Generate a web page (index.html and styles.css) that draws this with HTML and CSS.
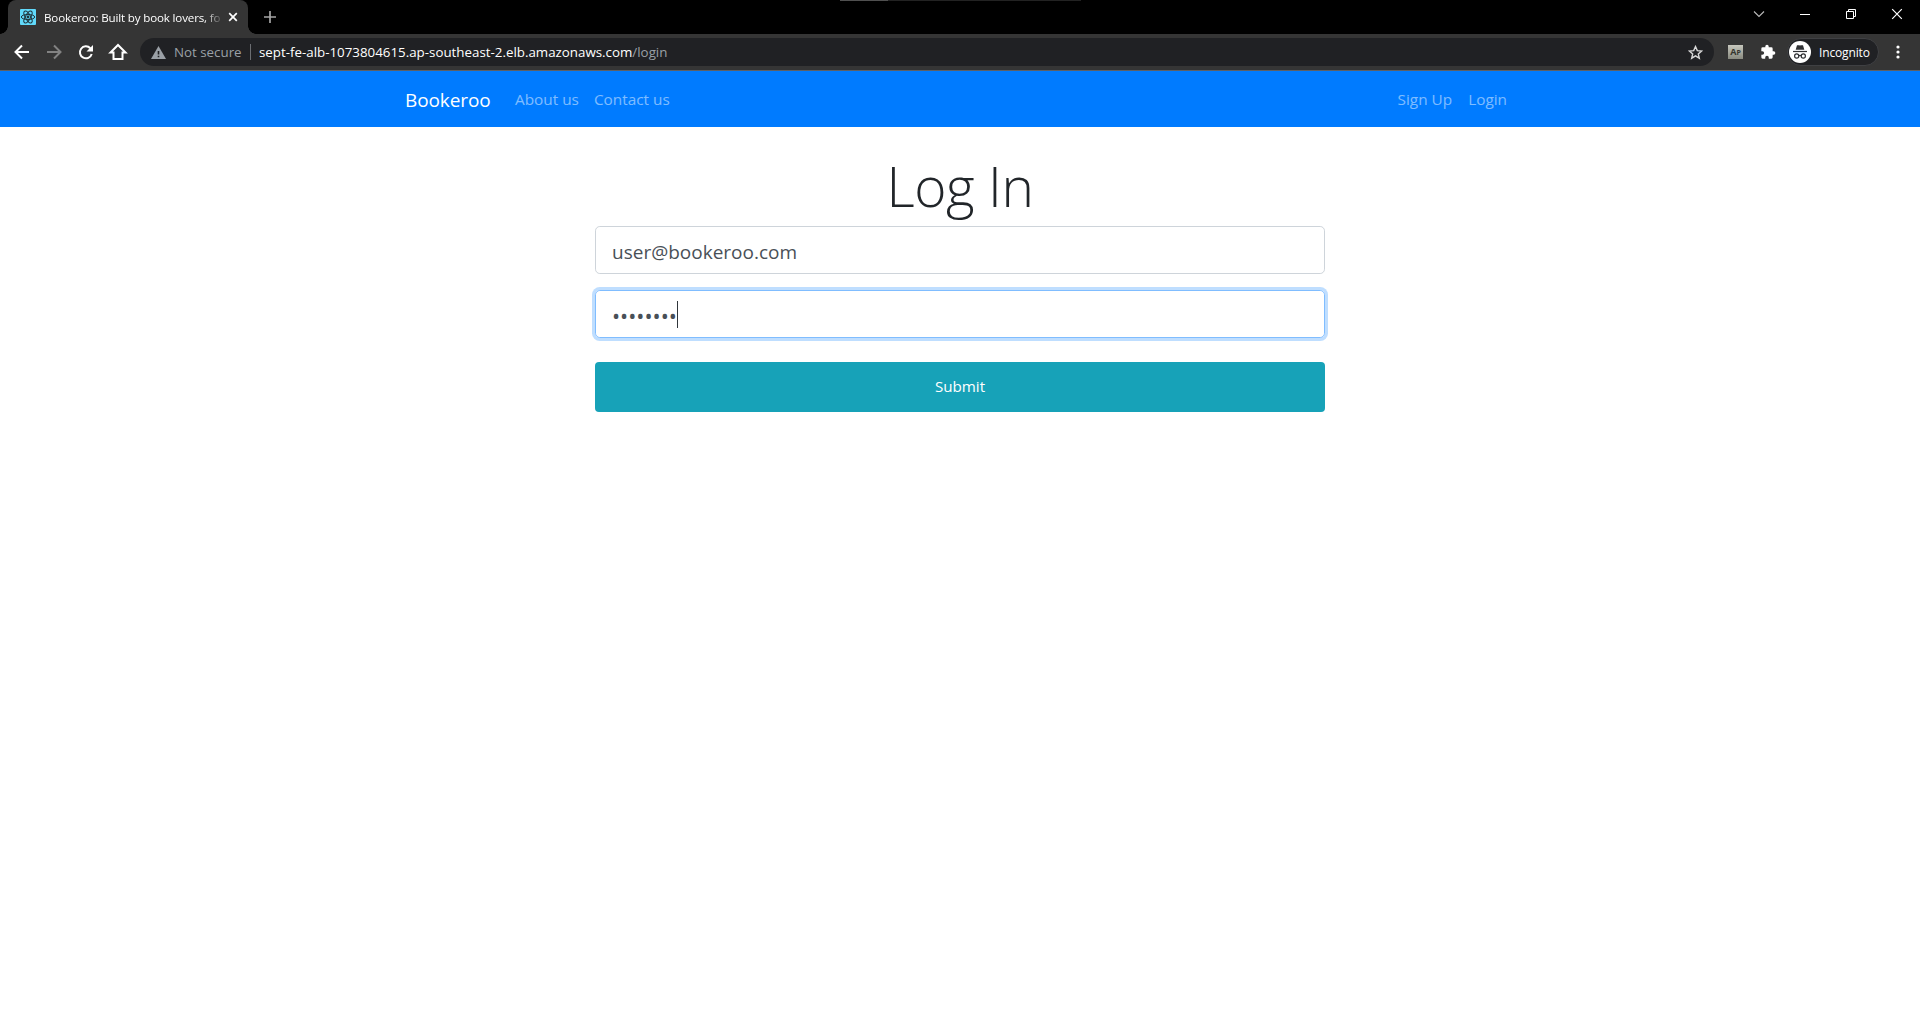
FILE: index.html
```html
<!DOCTYPE html>
<html lang="en">
<head>
<meta charset="utf-8">
<title>Bookeroo: Built by book lovers, for book lovers</title>
<link rel="stylesheet" href="styles.css">
</head>
<body>
<header class="browser">
  <div class="tabstrip">
    <div class="tab">
      <svg class="favicon" width="16" height="16" viewBox="0 0 16 16"><rect width="16" height="16" rx="1" fill="#61dafb"/><g fill="none" stroke="#20353d" stroke-width="1"><ellipse cx="8" cy="8" rx="6.7" ry="2.6"/><ellipse cx="8" cy="8" rx="6.7" ry="2.6" transform="rotate(60 8 8)"/><ellipse cx="8" cy="8" rx="6.7" ry="2.6" transform="rotate(120 8 8)"/></g><circle cx="8" cy="8" r="1.4" fill="#20353d"/></svg>
      <span class="tab-title">Bookeroo: Built by book lovers, fo</span>
      <svg class="tab-close" width="10" height="10" viewBox="0 0 10 10"><path d="M1.2 1.2l7.6 7.6M8.8 1.2L1.2 8.8" stroke="#fff" stroke-width="1.7"/></svg>
    </div>
    <svg class="new-tab" width="12" height="12" viewBox="0 0 12 12"><path d="M6 0v12M0 6h12" stroke="#a5a5a5" stroke-width="1.7"/></svg>
    <div class="drag-area"><div class="top-line"><i></i></div></div>
    <div class="window-controls">
      <svg width="46" height="28" viewBox="0 0 46 28"><path d="M18 11.5l5 5 5-5" fill="none" stroke="#bbb" stroke-width="1.1"/></svg>
      <svg width="46" height="28" viewBox="0 0 46 28"><path d="M18 14.5h10" stroke="#fff"/></svg>
      <svg width="46" height="28" viewBox="0 0 46 28"><path d="M18.500 11.500h7v7h-7zM20.500 11.500v-2h7v7h-2" fill="none" stroke="#fff"/></svg>
      <svg width="46" height="28" viewBox="0 0 46 28"><path d="M18.200 9.200l9.600 9.600M27.800 9.200l-9.600 9.600" stroke="#fff" stroke-width="1.200"/></svg>
    </div>
  </div>
  <div class="toolbar">
    <svg class="tool" width="32" height="36" viewBox="0 0 32 36"><path d="M23 18H10M16 11.500L9.500 18l6.500 6.500" transform="translate(6)" fill="none" stroke="#fff" stroke-width="2"/></svg>
    <svg class="tool" width="32" height="36" viewBox="0 0 32 36"><path d="M9 18h13M16 11.500l6.500 6.500-6.500 6.500" transform="translate(6)" fill="none" stroke="#828282" stroke-width="2"/></svg>
    <svg class="tool" width="32" height="36" viewBox="0 0 32 36"><g transform="translate(6)"><path d="M20.300 14.200A6 6 0 1 0 21.700 20" fill="none" stroke="#fff" stroke-width="2"/><path d="M23 11v6.500h-6.500z" fill="#fff"/></g></svg>
    <svg class="tool" width="32" height="36" viewBox="0 0 32 36"><path d="M11.500 18.500v6.500h9v-6.500h3L16 11l-7.500 7.500z" transform="translate(6)" fill="none" stroke="#fff" stroke-width="2"/></svg>
    <div class="omnibox">
      <svg class="warning" width="15" height="13" viewBox="0 0 15 13"><path d="M7.500 0L15 13H0z" fill="#9aa0a6"/><path d="M7.500 5v3.500M7.500 9.700v1.600" stroke="#202124" stroke-width="1.600"/></svg>
      <span class="secure">Not secure</span>
      <span class="divider"></span>
      <span class="domain">sept-fe-alb-1073804615.ap-southeast-2.elb.amazonaws.com</span><span class="path">/login</span>
      <svg class="star" width="15" height="15" viewBox="0 0 15 15"><path d="M7.500 1.600l1.800 4 4.300.4-3.300 2.900 1 4.300-3.800-2.300-3.800 2.300 1-4.300L1.400 6l4.300-.4z" fill="none" stroke="#d8d8d8" stroke-width="1.400"/></svg>
    </div>
    <div class="extension">A<small>P</small></div>
    <svg class="puzzle" width="24" height="24" viewBox="0 0 24 24"><path d="M20.500 11H19V7a2 2 0 0 0-2-2h-4V3.500a2.500 2.500 0 0 0-5 0V5H4a2 2 0 0 0-2 2v3.800h1.500a2.700 2.700 0 0 1 0 5.400H2V20a2 2 0 0 0 2 2h3.800v-1.500a2.700 2.700 0 0 1 5.400 0V22H17a2 2 0 0 0 2-2v-4h1.500a2.500 2.500 0 0 0 0-5z" fill="#fff"/></svg>
    <div class="profile">
      <svg width="22" height="22" viewBox="0 0 22 22"><circle cx="11" cy="11" r="11" fill="#fff"/><path d="M6.700 8.800L8 4.200h2l1 .4 1-.4h2l1.300 4.600z" fill="#303134"/><path d="M4 10.500h14" stroke="#303134" stroke-width="1.200"/><g fill="none" stroke="#303134" stroke-width="1.200"><circle cx="7.700" cy="15" r="2.100"/><circle cx="14.300" cy="15" r="2.100"/><path d="M9.800 14.700q1.200-.8 2.400 0"/></g></svg>
      <span>Incognito</span>
    </div>
    <svg class="menu" width="4" height="14" viewBox="0 0 4 14"><g fill="#fff"><circle cx="2" cy="2" r="1.600"/><circle cx="2" cy="7" r="1.600"/><circle cx="2" cy="12" r="1.600"/></g></svg>
  </div>
</header>
<nav class="navbar">
  <div class="container">
    <a class="brand">Bookeroo</a>
    <a class="link about">About us</a>
    <a class="link contact">Contact us</a>
    <a class="link signup">Sign Up</a>
    <a class="link login">Login</a>
  </div>
</nav>
<main class="login-form">
  <h1>Log In</h1>
  <div class="field"><span class="email">user@bookeroo.com</span></div>
  <div class="field focused"><span class="dots">••••••••</span><span class="caret"></span></div>
  <div class="submit" role="button"><span>Submit</span></div>
</main>
</body>
</html>
```
FILE: styles.css
```css
* { box-sizing: border-box; }
body { margin: 0; height: 1029px; overflow: hidden; background: #fff; color: #212529; font-family: "Open Sans", "Noto Sans", sans-serif; font-size: 16px; }
svg { display: block; flex: none; }
span, a { white-space: nowrap; }

.browser { height: 71px; background: #353535; border-bottom: 1px solid #5e6064; }
.tabstrip { height: 34px; display: flex; align-items: center; background: #000; }
.tab { position: relative; width: 240px; height: 34px; margin-left: 8px; padding: 0 12px; display: flex; align-items: center; background: #353535; border-radius: 8px 8px 0 0; }
.tab::before, .tab::after { content: ""; position: absolute; bottom: 0; width: 8px; height: 8px; }
.tab::before { left: -8px; background: radial-gradient(circle at 0 0, #000 7.5px, #353535 8px); }
.tab::after { right: -8px; background: radial-gradient(circle at 100% 0, #000 7.5px, #353535 8px); }
.tab-title { width: 177px; margin-left: 8px; color: #fff; font-size: 11.6px; letter-spacing: -0.16px; -webkit-mask-image: linear-gradient(90deg, #000 160px, transparent 180px); mask-image: linear-gradient(90deg, #000 160px, transparent 180px); }
.tab-close { margin-left: 8px; }
.new-tab { margin-left: 16px; }
.drag-area { flex: 1; align-self: flex-start; padding-left: 564px; }
.top-line { width: 241px; height: 1px; background: #222; }
.top-line i { display: block; width: 48px; height: 1px; background: #505050; }
.window-controls { display: flex; align-self: flex-start; }

.toolbar { height: 36px; display: flex; align-items: center; }
.tool { overflow: visible; }
.omnibox { width: 1574px; height: 28px; margin-left: 12px; padding: 0 11px; display: flex; align-items: center; background: #202124; border-radius: 14px; font-size: 13.33px; }
.secure { width: 68px; margin-left: 8px; color: #9aa0a6; }
.divider { width: 1px; height: 16px; margin: 0 8px; background: #6b6e72; }
.domain { color: #fff; }
.path { color: #9aa0a6; }
.star { margin-left: auto; }
.extension { width: 15px; height: 14px; margin-left: 14px; background: linear-gradient(#c6c7bd, #898a80); color: #34352f; font-size: 9px; font-weight: 700; line-height: 13px; text-align: center; white-space: nowrap; }
.extension small { font-size: 7px; }
.puzzle { width: 16px; height: 16px; margin-left: 17px; }
.profile { width: 92px; height: 28px; margin-left: 11px; padding-left: 1px; display: flex; align-items: center; gap: 8px; background: #202124; border: 1px solid #3f4043; border-radius: 14px; color: #fff; font-size: 12px; letter-spacing: -0.15px; }
.menu { margin-left: 17px; }

.navbar { height: 56px; background: #007bff; }
.container { width: 1110px; height: 56px; margin: 0 auto; display: flex; align-items: center; color: #fff; }
.brand { width: 110px; padding-top: 1px; font-size: 19px; letter-spacing: -0.1px; }
.link { padding-bottom: 1px; color: rgba(255, 255, 255, .5); font-size: 15.35px; }
.contact { margin-left: 15px; }
.signup { margin-left: auto; }
.login { margin: 0 8px 0 16px; }

.login-form { width: 730px; margin: 24px auto 0; }
h1 { margin: 0 0 7px; padding-top: 1px; height: 68px; font-size: 55px; font-weight: 300; line-height: 67px; letter-spacing: -0.4px; text-align: center; }
.field { height: 48px; margin-bottom: 16px; padding: 3px 16px 0; display: flex; align-items: center; border: 1px solid #ced4da; border-radius: 4.8px; color: #495057; font-size: 19px; }
.focused { border-color: #80bdff; box-shadow: 0 0 0 3px #bfdeff; }
.dots { font-size: 21.6px; line-height: 28px; }
.caret { width: 1px; height: 27px; margin-bottom: 3px; background: #30363b; }
.submit { height: 50px; margin-top: 24px; padding-bottom: 2px; border-radius: 4px; display: flex; align-items: center; justify-content: center; background: #17a2b8; color: #fff; font-size: 15.2px; }
```
